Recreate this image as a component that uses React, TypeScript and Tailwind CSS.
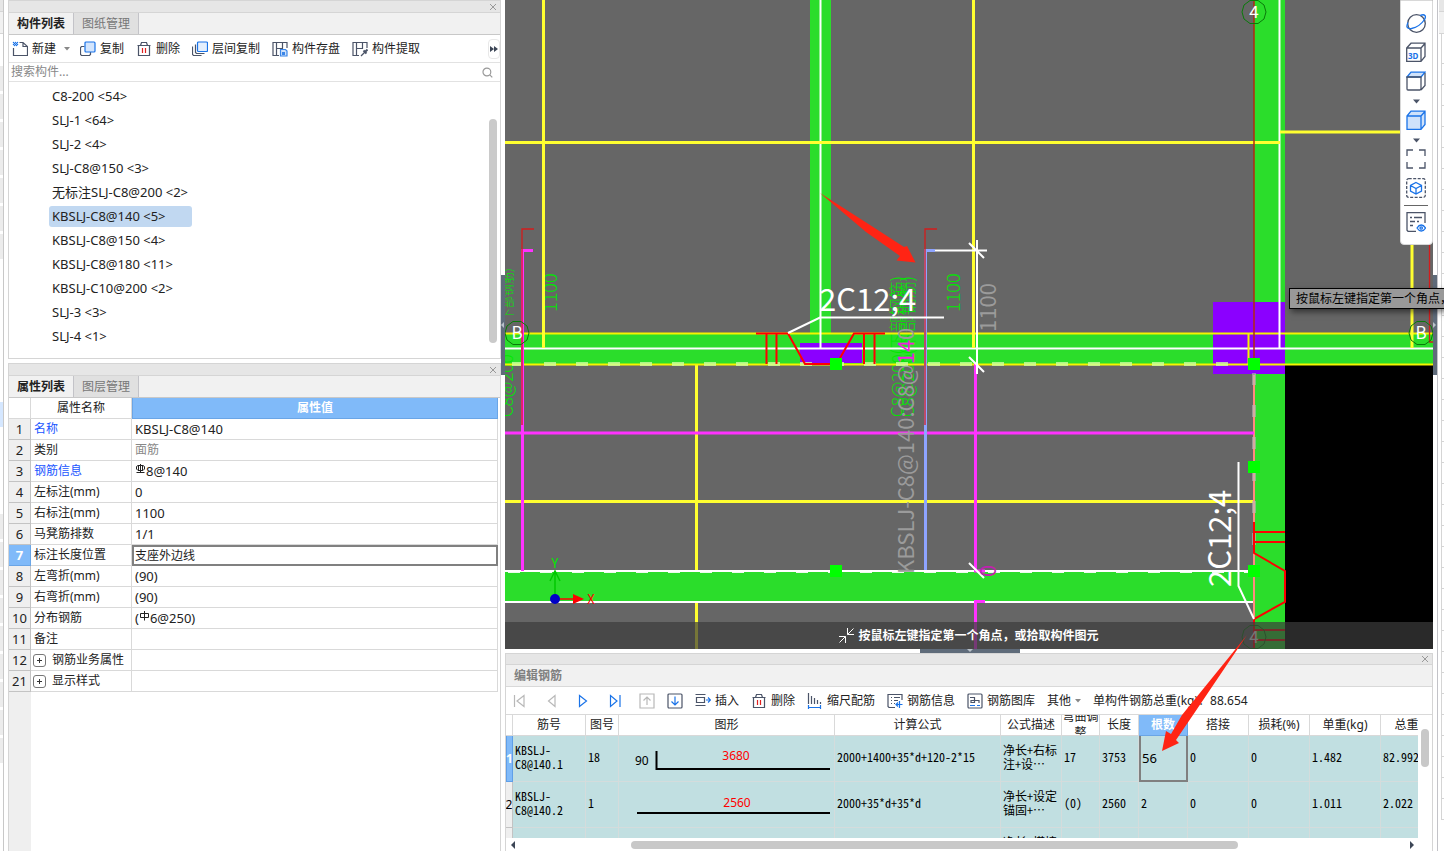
import { useState } from 'react';
import type { ReactNode } from 'react';

const components = [
  'C8-200 <54>',
  'SLJ-1 <64>',
  'SLJ-2 <4>',
  'SLJ-C8@150 <3>',
  '无标注SLJ-C8@200 <2>',
  'KBSLJ-C8@140 <5>',
  'KBSLJ-C8@150 <4>',
  'KBSLJ-C8@180 <11>',
  'KBSLJ-C10@200 <2>',
  'SLJ-3 <3>',
  'SLJ-4 <1>',
];

type Property = {
  no: number;
  name: string;
  value: ReactNode;
  link?: boolean;
  muted?: boolean;
  group?: boolean;
};

// HRB400
const RebarC = () => (
  <svg width="11" height="11" viewBox="0 0 11 11" className="mb-1 shrink-0" fill="none" stroke="#222">
    <path d="M3 1.500h5l1.500 1v2.500l-1.500 1.500h-5l-1.500-1.500v-2.500zM5.500 0v9M3.500 1.500v5M7.500 1.500v5M1.500 8.500h8" />
  </svg>
);

// HPB300
const RebarA = () => (
  <svg width="11" height="11" viewBox="0 0 11 11" className="mb-1 shrink-0" fill="none" stroke="#222">
    <path d="M1.500 2.500h8v4h-8zM5.500 0v9.500" />
  </svg>
);

const properties: Property[] = [
  { no: 1, name: '名称', value: 'KBSLJ-C8@140', link: true },
  { no: 2, name: '类别', value: '面筋', muted: true },
  { no: 3, name: '钢筋信息', value: <><RebarC />8@140</>, link: true },
  { no: 4, name: '左标注(mm)', value: '0' },
  { no: 5, name: '右标注(mm)', value: '1100' },
  { no: 6, name: '马凳筋排数', value: '1/1' },
  { no: 7, name: '标注长度位置', value: '支座外边线' },
  { no: 8, name: '左弯折(mm)', value: '(90)' },
  { no: 9, name: '右弯折(mm)', value: '(90)' },
  { no: 10, name: '分布钢筋', value: <>(<RebarA />6@250)</> },
  { no: 11, name: '备注', value: '' },
  { no: 12, name: '钢筋业务属性', value: '', group: true },
  { no: 21, name: '显示样式', value: '', group: true },
];

const CloseIcon = () => (
  <svg width="8" height="8" viewBox="0 0 8 8" stroke="#999" fill="none">
    <path d="M1 1l6 6M7 1L1 7" />
  </svg>
);

const Caret = () => (
  <svg width="6" height="4" viewBox="0 0 6 4" fill="#888">
    <path d="M0 0h6L3 3.500z" />
  </svg>
);

const Icon = ({ children }: { children: ReactNode }) => (
  <svg width="16" height="16" viewBox="0 0 16 16" fill="none" stroke="#4b5468" strokeWidth="1.2" className="shrink-0">
    {children}
  </svg>
);

const NewIcon = () => (
  <Icon>
    <path d="M1.500 7v7.500h14v-9L11 1.500H7.500M11 1.500v4h4.500" />
    <path d="M1 1h1v1H1zM3 1h1v1H3zM5 1h1v1H5zM2 2h1v1H2zM4 2h1v1H4zM1 3h1v1H1zM3 3h1v1H3zM5 3h1v1H5zM2 4h1v1H2zM4 4h1v1H4z" fill="#1a73e8" stroke="#1a73e8" strokeWidth="0.300" />
  </Icon>
);

const CopyIcon = () => (
  <Icon>
    <path d="M4.500 5.500H1.500l-1 1v7l1 1h8l1-1v-3" />
    <rect x="5" y="1" width="10" height="10" rx="1" fill="#d3e5fd" stroke="#1a73e8" />
  </Icon>
);

const DeleteIcon = () => (
  <Icon>
    <path d="M1.500 4.500h13M4.500 4.500l1-3h5l1 3M2.500 4.500v10h11v-10" />
    <path d="M6.500 7v5M9.500 7v5" stroke="#e02020" />
  </Icon>
);

const FloorCopyIcon = () => (
  <Icon>
    <path d="M3.500 3.500v8l1 1h8M.5 5.500v8l1 1h8" />
    <rect x="5.500" y="1" width="10" height="9.500" rx="1" fill="#e4effd" stroke="#1a73e8" />
  </Icon>
);

const SaveIcon = () => (
  <Icon>
    <path d="M7 14.500H1V1.500h14V7M4.500 14.500v-7h6v-6M4.500 1.500v6" />
    <path d="M8.500 8.500h5l1.500 1.500v5h-6.500z" stroke="#3b86e8" fill="#cfe2fb" />
    <path d="M10 11h3v3h-3z" fill="#3b86e8" stroke="none" />
  </Icon>
);

const ExtractIcon = () => (
  <Icon>
    <path d="M7 14.500H1V1.500h14V7M4.500 14.500v-7h6v-6M4.500 1.500v6" />
    <path d="M9 15l4-4" />
    <path d="M11.500 9.500l3 3M13.500 10.500l2-2" strokeWidth="2" />
  </Icon>
);

const InsertIcon = () => (
  <Icon>
    <path d="M.5 1.500h10M.5 12.500h10M1.500 4.500h8v5h-8z" />
    <path d="M11 7h4.500M13 4.500L15.500 7 13 9.500" stroke="#1a73e8" />
  </Icon>
);

const ScaleIcon = () => (
  <Icon>
    <path d="M1.500 0v11M4.500 3v8M7.500 5v6M10.500 7v4M13.500 9v2" />
    <path d="M1.500 12v4M13.500 12v4M2 14.500h11" stroke="#1a73e8" />
  </Icon>
);

const InfoIcon = () => (
  <Icon>
    <path d="M8 14.500H2l-1-1v-12h14V7M4 4.500h1M7 4.500h6M4 7.500h1M7 7.500h4M4 10.500h1M7 10.500h1" />
    <path d="M12.500 8v7M9 11.500h6.500M11 9.500l-2 2 2 2" stroke="#1a73e8" />
  </Icon>
);

const LibraryIcon = () => (
  <Icon>
    <rect x="1" y="1" width="14" height="14" rx="1" />
    <path d="M3 4.500h4.500v5H4V7.500h8V10" />
    <path d="M3 12.500h5M10 12.500h3" stroke="#1a73e8" />
  </Icon>
);

const ToolButton = ({ icon, label }: { icon: ReactNode; label: string }) => (
  <button type="button" className="flex items-center gap-1 whitespace-nowrap">
    {icon}
    {label}
  </button>
);

const TabBar = ({ active, other }: { active: string; other: string }) => (
  <>
    <div className="flex h-[13px] shrink-0 items-center justify-end border-y border-[#d5d5d5] bg-[#e6e6e6] pr-[3px]">
      <button type="button" aria-label="关闭">
        <CloseIcon />
      </button>
    </div>
    <div className="flex h-[22px] shrink-0 border-b border-[#c8c8c8] bg-[#f1f1f1]">
      <button type="button" className="w-[65px] border-r border-[#c3c3c8] font-bold text-[#222]">
        {active}
      </button>
      <button type="button" className="w-[65px] border-r border-[#c3c3c8] bg-[#e0e0e0] text-[#777]">
        {other}
      </button>
    </div>
  </>
);

const ComponentPanel = () => {
  const [selected, setSelected] = useState('KBSLJ-C8@140 <5>');
  return (
    <section className="relative border-x border-b border-[#d5d5d5] bg-white">
      <TabBar active="构件列表" other="图纸管理" />
      <div className="flex h-7 items-center gap-3 border-b border-[#e2e2e2] pl-[3px]">
        <ToolButton icon={<NewIcon />} label="新建" />
        <div className="-ml-1 mr-[-2px]">
          <Caret />
        </div>
        <ToolButton icon={<CopyIcon />} label="复制" />
        <ToolButton icon={<DeleteIcon />} label="删除" />
        <ToolButton icon={<FloorCopyIcon />} label="层间复制" />
        <ToolButton icon={<SaveIcon />} label="构件存盘" />
        <ToolButton icon={<ExtractIcon />} label="构件提取" />
        <button type="button" aria-label="更多" className="ml-auto flex h-5 w-3 items-center justify-center rounded border border-[#e8e8e8]">
          <svg width="8" height="6" viewBox="0 0 8 6" fill="#3c4656" className="shrink-0">
            <path d="M0 0l4 3-4 3zM4 0l4 3-4 3z" />
          </svg>
        </button>
      </div>
      <label className="flex h-[19px] items-center border-b border-[#e2e2e2] pl-0.5 pr-[7px]">
        <input type="text" aria-label="搜索构件" placeholder="搜索构件..." className="w-full outline-none placeholder:text-[#888]" />
        <svg width="11" height="11" viewBox="0 0 11 11" fill="none" stroke="#999" strokeWidth="1.2">
          <circle cx="5" cy="5" r="4" />
          <path d="M8 8l2.500 2.500" />
        </svg>
      </label>
      <ul className="pt-[2px] pb-[10px] pl-10 text-[13px]">
        {components.map((item) => (
          <li key={item} className="flex h-6 items-center">
            <button
              type="button"
              onClick={() => setSelected(item)}
              className={
                item === selected
                  ? 'h-[21px] w-[143px] rounded-[3px] bg-[#c1d8f1] pl-[3px] text-left whitespace-nowrap'
                  : 'h-[21px] w-[143px] pl-[3px] text-left whitespace-nowrap'
              }
            >
              {item}
            </button>
          </li>
        ))}
      </ul>
      <div className="absolute right-[3px] bottom-[15px] h-56 w-2 rounded-full bg-[#cacaca]" />
    </section>
  );
};

const PropertyPanel = () => (
  <section className="flex grow flex-col border-x border-[#d5d5d5] bg-white">
    <TabBar active="属性列表" other="图层管理" />
    <table className="mr-[2px] table-fixed border-separate border-spacing-0">
      <colgroup>
        <col className="w-[22px]" />
        <col className="w-[101px]" />
        <col />
      </colgroup>
      <thead>
        <tr className="h-[21px]">
          <th className="border-r border-b border-[#d9d9d9] p-0" />
          <th className="border-r border-b border-[#d9d9d9] p-0 font-normal">属性名称</th>
          <th className="border border-t-0 border-[#6aa5e6] bg-[#80baf9] p-0 font-bold text-white">属性值</th>
        </tr>
      </thead>
      <tbody>
        {properties.map((row) => (
          <tr key={row.no} className="h-[21px]">
            <td
              className={
                row.no === 7
                  ? 'border-r border-b border-[#6aa5e6] bg-[#80baf9] p-0 text-center text-[13px] leading-5 font-bold text-white'
                  : 'border-r border-b border-[#c3c3c3] bg-[#efefef] p-0 text-center text-[13px] leading-5'
              }
            >
              {row.no}
            </td>
            <td className="border-r border-b border-[#d9d9d9] p-0 pl-[3px]">
              <div className={row.link ? 'flex h-5 items-center text-[#1a56ff]' : 'flex h-5 items-center'}>
                {row.group && (
                  <button type="button" aria-label="展开" className="mr-[6px] -ml-px flex size-[13px] items-center justify-center rounded-[3px] border border-[#777]">
                    <svg width="5" height="5" viewBox="0 0 5 5" stroke="#333">
                      <path d="M2.500 0v5M0 2.500h5" />
                    </svg>
                  </button>
                )}
                {row.name}
              </div>
            </td>
            <td className={row.no === 7 ? 'border-2 border-[#808080] p-0 pl-px' : 'border-r border-b border-[#d9d9d9] p-0 pl-[3px]'}>
              <div
                className={
                  row.muted ? 'flex h-5 items-center text-[#888]' : row.no === 7 ? 'flex h-[17px] items-center' : 'flex h-5 items-center text-[13px]'
                }
              >
                {row.value}
              </div>
            </td>
          </tr>
        ))}
      </tbody>
    </table>
    <div className="w-[22px] grow bg-[#efefef]" />
  </section>
);

const AxisBubble = ({ x, y, label }: { x: number; y: number; label: string }) => (
  <g>
    <path
      transform={`translate(${x} ${y})`}
      d="M-4 -11.500L4 -11.500L10 -7L12 0L10 7L4 11.500L-4 11.500L-10 7L-12 0L-10 -7Z"
      fill="none"
      stroke="#0a7a0a"
    />
    <text x={x} y={y + 6} textAnchor="middle" fill="#fff" fontSize="17">
      {label}
    </text>
  </g>
);

const Grip = ({ x, y }: { x: number; y: number }) => <rect x={x - 6} y={y - 6} width="12" height="12" fill="#0f0" />;

const Drawing = () => (
  <svg
    className="absolute inset-0 size-full font-['Noto_Sans_CJK_SC',sans-serif]"
    viewBox="505 0 928 649"
    preserveAspectRatio="xMinYMin slice"
    fill="none"
  >
    <rect x="505" width="928" height="649" fill="#666" />
    <rect x="1285" y="365" width="148" height="284" fill="#000" />

    {/* slab grid below the beam */}
    <path d="M696.500 364V649M505 501.500H1254" stroke="#ffff30" strokeWidth="3" />

    {/* beams */}
    <g fill="#2bdd2b">
      <rect x="810" width="21" height="334" />
      <rect x="505" y="333" width="928" height="32" />
      <rect x="505" y="571" width="780" height="31" />
      <rect x="1254" width="31" height="649" />
    </g>
    <rect x="800" y="343" width="62" height="20" fill="#8b00ff" />
    <rect x="1213" y="302" width="72" height="72" fill="#8b00ff" />

    {/* dimension texts from the drawing sheet */}
    <g fill="#00e800" fontSize="17" fontWeight="300">
      <text transform="translate(513 320) rotate(-90)" fontSize="12">下部钢筋)</text>
      <text transform="translate(513 417) rotate(-90)">C8@200</text>
      <text transform="translate(904 417) rotate(-90)">C8@200(下部钢筋)</text>
      <text transform="translate(914 417) rotate(-90)">C8@200(下部钢筋)</text>
      <g fontSize="18">
        <text transform="translate(557 312) rotate(-90)">1100</text>
        <text transform="translate(960 312) rotate(-90)">1100</text>
      </g>
    </g>

    <path d="M505 333.500H1433M505 364.500H1433" stroke="#f4f400" strokeWidth="2" />
    <path d="M505 348.500H1433M820.500 0V348M1279.500 0V348M505 571H1254M505 602H1254" stroke="#fff" strokeWidth="2" />
    <path d="M512 364H1248" stroke="#d0ffa0" strokeWidth="4" strokeDasharray="12 20" opacity="0.8" />
    <path d="M508 571.500H1248" stroke="#fff" strokeWidth="3" strokeDasharray="12 20" opacity="0.9" />
    <path d="M543.500 0V348M973.500 0V348M1412 0V348M505 142.500H1280M1280 132H1433" stroke="#ffff30" strokeWidth="3" />
    <path d="M1248.500 333V364" stroke="#f4f400" strokeWidth="2" />
    <path d="M1254 0V364" stroke="#b02a10" strokeWidth="1.500" />
    <path d="M1254 375V619" stroke="#ff8c80" strokeWidth="2" />
    <path d="M1254 373V560" stroke="#bbb" strokeWidth="4" strokeDasharray="12 20" opacity="0.6" />

    {/* top reinforcement */}
    <g stroke="#ff32ff" strokeWidth="3">
      <path d="M505 433H1254M522.500 571V250.500H533M975.500 364V571H985M985 601.500H975.500V649" />
    </g>
    <path d="M925.500 570V250.500H935" stroke="#8ea4ff" strokeWidth="3" />
    <path d="M522 425V229H534M925 425V229H937M1429.500 0V342H1433" stroke="#d41c1c" strokeWidth="1.300" />
    <path d="M935 250.500H987M977 240V374M969 243L984 258M969 357L984 372M969 563L984 578" stroke="#fff" strokeWidth="2" />

    {/* stirrup hooks */}
    <path
      d="M756 333.500H788L805 364H830M766.500 334V364M776.500 334V364M840 358L854 333.500H885M864 334V364M874.500 334V364"
      stroke="#f00"
      strokeWidth="2"
    />
    <path d="M1254 522V553L1285 571V602L1254 619V649M1254 532H1285M1254 542H1285M1254 630H1285M1254 640H1285" stroke="#f00" strokeWidth="2" />

    <g fill="#9b9b9b" fontSize="22">
      <text transform="translate(914 574) rotate(-90)">
        KBSLJ-C8@140:C8@<tspan fill="#f020e0">14</tspan>0
      </text>
      <text transform="translate(996 332) rotate(-90)">1100</text>
      <text transform="translate(996 577) rotate(-90)" fill="#c020b0">0</text>
    </g>
    <path d="M788 333L820 317.500H944M1238.500 462V586L1254 619" stroke="#fff" strokeWidth="2" />
    <g fill="#fff" fontSize="31">
      <text x="819" y="311">2C12;4</text>
      <text transform="translate(1231 587) rotate(-90)">2C12;4</text>
    </g>

    <Grip x={836} y={364} />
    <Grip x={836} y={571} />
    <Grip x={1254} y={364} />
    <Grip x={1254} y={467} />
    <Grip x={1254} y={571} />

    <AxisBubble x={1254} y={12} label="4" />
    <AxisBubble x={1254} y={637} label="4" />
    <AxisBubble x={517} y={333} label="B" />
    <AxisBubble x={1421} y={333} label="B" />

    {/* UCS */}
    <path d="M555 599V572M550 581L555 571L560 581" stroke="#00c800" strokeWidth="1.500" />
    <path d="M555 599H575" stroke="#f00" strokeWidth="1.500" />
    <path d="M573 594L584 599L573 604Z" fill="#f00" />
    <circle cx="555" cy="599" r="5" fill="#0000c8" />
    <text x="555" y="568" textAnchor="middle" fill="#00e800" fontSize="13">Y</text>
    <text x="591" y="604" textAnchor="middle" fill="#f00" fontSize="13">X</text>

    <path d="M820 193L870 225L904 247L907 246L915.500 262.500L896.500 260.500L900 256L866 232Z" fill="#ff2414" />
  </svg>
);

const ViewIcon = ({ children }: { children: ReactNode }) => (
  <svg width="20" height="20" viewBox="0 0 20 20" fill="none" stroke="#4b5468" strokeWidth="1.300">
    {children}
  </svg>
);

const ViewCaret = () => (
  <svg width="7" height="10" viewBox="0 0 7 10" fill="#4b5468">
    <path d="M0 3.500h7l-3.500 4z" />
  </svg>
);

const ViewToolbar = () => (
  <div className="absolute top-0 right-0 flex w-[33px] flex-col items-center rounded-b border border-[#d8d8d8] bg-white pt-3 pr-px pb-3 *:shrink-0">
    <button type="button" aria-label="动态观察" className="mb-[9px]">
      <ViewIcon>
        <circle cx="10.500" cy="10.500" r="8.800" />
        <path d="M14 2.500c5-2 6.500.5 4.500 4-2.500 4-8 8-13 9-5 .8-5.500-2-3.500-6" stroke="#1a73e8" />
      </ViewIcon>
    </button>
    <button type="button" aria-label="三维" className="mb-[9px]">
      <ViewIcon>
        <path d="M.7 6L5 1.200H19V14.500L15 19.300H.7zM.7 6H15V19.300M15 6l4-4.500" />
        <text x="2" y="17" fill="#1a73e8" stroke="none" fontSize="8" fontWeight="700">3D</text>
      </ViewIcon>
    </button>
    <button type="button" aria-label="俯视">
      <ViewIcon>
        <path d="M1 6L5 1.200H19L15 6z" fill="#cfe2fb" stroke="#1a73e8" />
        <path d="M1 6V18q0 1 1 1H14l1-1V6zM19 2V14.500L15 19" />
      </ViewIcon>
    </button>
    <div className="flex h-[19px] items-center">
      <ViewCaret />
    </div>
    <button type="button" aria-label="实体">
      <ViewIcon>
        <path d="M1 6L5 1.200H19V14.500L15 19.300H1zM1 6H15V19.300M15 6l4-4.500" fill="#cfe2fb" stroke="#1a73e8" />
      </ViewIcon>
    </button>
    <div className="flex h-[19px] items-center">
      <ViewCaret />
    </div>
    <button type="button" aria-label="全屏" className="mb-[9px]">
      <ViewIcon>
        <path d="M1 7V1H7M13 1H19V7M19 13V19H13M7 19H1V13" />
      </ViewIcon>
    </button>
    <button type="button" aria-label="局部三维" className="mb-[7px]">
      <ViewIcon>
        <rect x="0.700" y="0.700" width="18.600" height="18.600" rx="2" strokeDasharray="3 1.500" />
        <path d="M10 4.500L15.500 7.500V13L10 16L4.500 13V7.500zM4.500 7.500L10 10.500L15.500 7.500M10 10.500V16" stroke="#1a73e8" />
      </ViewIcon>
    </button>
    <div className="mb-[6px] h-px w-6 bg-[#666]" />
    <button type="button" aria-label="显示设置">
      <ViewIcon>
        <path d="M10 19.300H2l-1-1V.7H19V11M4 5.500h2M8 5.500h8M4 9.500h5M11 9.500h2M4 13.500h3" />
        <path d="M11 16c2.500-4 6-4 8.500 0-2.500 4-6 4-8.500 0z" stroke="#1a73e8" />
        <circle cx="15.200" cy="16" r="1.200" stroke="#1a73e8" />
      </ViewIcon>
    </button>
  </div>
);

const ShapeHook = () => (
  <svg width="215" height="45" viewBox="0 0 215 45" className="block font-['Noto_Sans',sans-serif]" fontSize="12">
    <path d="M37.500 15V33H211" fill="none" stroke="#000" strokeWidth="2" />
    <text x="16" y="29">90</text>
    <text x="117" y="24" textAnchor="middle" fill="#f00">3680</text>
  </svg>
);

const ShapeStraight = () => (
  <svg width="215" height="45" viewBox="0 0 215 45" className="block font-['Noto_Sans',sans-serif]" fontSize="12">
    <path d="M18 31H211" stroke="#000" strokeWidth="2" />
    <text x="118" y="25" textAnchor="middle" fill="#f00">2560</text>
  </svg>
);

const columns = ['筋号', '图号', '图形', '计算公式', '公式描述', '弯曲调整', '长度', '根数', '搭接', '损耗(%)', '单重(kg)', '总重(kg)'];

const bars: ReactNode[][] = [
  [<>KBSLJ-<br />C8@140.1</>, '18', <ShapeHook />, '2000+1400+35*d+120-2*15', <>净长+右标<br />注+设⋯</>, '17', '3753', '56', '0', '0', '1.482', '82.992'],
  [<>KBSLJ-<br />C8@140.2</>, '1', <ShapeStraight />, '2000+35*d+35*d', <>净长+设定<br />锚固+⋯</>, '(0)', '2560', '2', '0', '0', '1.011', '2.022'],
  ['', '', '', '', <>净长+搭接<br />锚固+⋯</>, '', '', '', '', '', '', ''],
];

const NavButton = ({ label, d, color }: { label: string; d: string; color: string }) => (
  <button type="button" aria-label={label}>
    <svg width="16" height="16" viewBox="0 0 16 16" fill="none" stroke={color} strokeWidth="1.200">
      <path d={d} />
    </svg>
  </button>
);

const RebarPanel = () => (
  <section className="flex h-[198px] shrink-0 flex-col border-x border-t border-[#d5d5d5] bg-white">
    <div className="flex h-[11px] shrink-0 items-center justify-end border-b border-[#d5d5d5] bg-[#e6e6e6] pr-[3px]">
      <button type="button" aria-label="关闭">
        <CloseIcon />
      </button>
    </div>
    <h2 className="h-[22px] shrink-0 border-b border-[#d9d9d9] bg-[#f1f1f1] pl-2 leading-[21px] font-bold text-[#808080]">编辑钢筋</h2>
    <div className="flex h-7 shrink-0 items-center gap-3 border-b border-[#d9d9d9] pl-[5px] whitespace-nowrap">
      <div className="flex gap-4 pr-1">
        <NavButton label="首条" d="M3.500 2v12M13 2.500v11L6 8z" color="#b8b8b8" />
        <NavButton label="上一条" d="M12 2.500v11L5.500 8z" color="#b8b8b8" />
        <NavButton label="下一条" d="M4.500 2.500v11L11.500 8z" color="#1a73e8" />
        <NavButton label="末条" d="M3.500 2.500v11L10 8zM13 2v12" color="#1a73e8" />
      </div>
      <NavButton label="上移" d="M1 1h14v14H1zM8 12V4.500M4.500 7.500L8 4l3.500 3.500" color="#b8b8b8" />
      <button type="button" aria-label="下移">
        <Icon>
          <rect x="1" y="1" width="14" height="14" rx="1" />
          <path d="M8 3.500V12M4.500 8.500L8 12l3.500-3.500" stroke="#1a73e8" />
        </Icon>
      </button>
      <ToolButton icon={<InsertIcon />} label="插入" />
      <ToolButton icon={<DeleteIcon />} label="删除" />
      <ToolButton icon={<ScaleIcon />} label="缩尺配筋" />
      <ToolButton icon={<InfoIcon />} label="钢筋信息" />
      <ToolButton icon={<LibraryIcon />} label="钢筋图库" />
      <button type="button" className="flex items-center gap-1">
        其他
        <Caret />
      </button>
      <span>单构件钢筋总重(kg)：88.654</span>
    </div>
    <div className="flex min-h-0 grow">
      <div className="min-w-0 grow overflow-hidden">
        <table className="w-[948px] table-fixed border-separate border-spacing-0">
          <colgroup>
            <col className="w-[7px]" />
            <col className="w-[73px]" />
            <col className="w-[33px]" />
            <col className="w-[216px]" />
            <col className="w-[166px]" />
            <col className="w-[61px]" />
            <col className="w-[38px]" />
            <col className="w-[39px]" />
            <col className="w-[49px]" />
            <col className="w-[61px]" />
            <col className="w-[61px]" />
            <col className="w-[71px]" />
            <col className="w-[73px]" />
          </colgroup>
          <thead>
            <tr>
              <th className="border-r border-b border-[#d9d9d9] p-0" />
              {columns.map((name) => (
                <th
                  key={name}
                  className={
                    name === '根数'
                      ? 'border-r border-b border-[#6aa5e6] bg-[#80baf9] p-0 font-bold text-white'
                      : 'border-r border-b border-[#d9d9d9] p-0 font-normal'
                  }
                >
                  <div className="flex h-5 items-center justify-center overflow-hidden leading-4">{name}</div>
                </th>
              ))}
            </tr>
          </thead>
          <tbody className="font-['Noto_Sans_Mono_CJK_SC','DejaVu_Sans_Mono','Noto_Sans_CJK_SC',monospace] leading-[14px] text-black">
            {bars.map((cells, row) => (
              <tr key={row} className="h-[46px]">
                <td
                  className={
                    row === 0
                      ? "border border-t-0 border-[#5f9fe8] bg-[#80baf9] p-0 text-center font-['Noto_Sans'] font-bold text-white"
                      : "border-r border-b border-[#c3c3c3] bg-[#efefef] p-0 text-center font-['Noto_Sans']"
                  }
                >
                  <div className="flex justify-center">{row < 2 && row + 1}</div>
                </td>
                {cells.map((cell, i) =>
                  row === 0 && i === 7 ? (
                    <td key={i} className="border-2 border-t-0 border-[#808080] bg-[#c1dfe1] p-0 pl-px">
                      <input aria-label="根数" defaultValue="56" className="w-10 font-['Noto_Sans'] text-[13px] outline-none" />
                    </td>
                  ) : (
                    <td key={i} className={i === 2 ? 'border-r border-b border-[#d4dcdc] bg-[#c1dfe1] p-0' : 'border-r border-b border-[#d4dcdc] bg-[#c1dfe1] p-0 pb-1 pl-[2px] whitespace-nowrap'}>
                      {cell}
                    </td>
                  ),
                )}
              </tr>
            ))}
          </tbody>
        </table>
      </div>
      <div className="w-[14px] pt-[14px] pl-[3px]">
        <div className="h-[38px] w-2 rounded-full bg-[#c8c8c8]" />
      </div>
    </div>
    <div className="flex h-[13px] shrink-0 items-center pr-[18px] pl-[5px]">
      <svg width="4" height="8" viewBox="0 0 4 8" fill="#3c4656">
        <path d="M4 0v8L0 4z" />
      </svg>
      <div className="flex grow pl-[116px]">
        <div className="h-2 w-[607px] rounded-full bg-[#c8c8c8]" />
      </div>
      <svg width="4" height="8" viewBox="0 0 4 8" fill="#3c4656">
        <path d="M0 0v8l4-4z" />
      </svg>
    </div>
  </section>
);

const leftBlocks = Array.from({ length: 25 }, (_, i) => i);

const LeftEdge = () => (
  <div className="flex w-2 shrink-0 bg-white">
    <div className="w-1 overflow-hidden border-r border-[#c8c8c8]">
      <div className="h-3 border-b border-[#d5d5d5] bg-[#e6e6e6]" />
      <div className="h-[22px] border-b border-[#d5d5d5] bg-[#f1f1f1]" />
      <div className="flex flex-col gap-[3px] pt-8">
        {leftBlocks.map((i) => (
          <div key={i} className={i === 12 ? 'h-[25px] bg-[#d5e7ff]' : i < 7 || i > 15 ? 'h-[25px] bg-[#ececec]' : 'h-[25px]'} />
        ))}
      </div>
    </div>
  </div>
);

const rightRows = Array.from({ length: 36 }, (_, i) => i);

const RightEdge = () => (
  <div className="flex w-[11px] shrink-0 bg-white">
    <div className="flex w-[5px] items-center border-r border-[#c3c3c8]">
      <div className="mb-[201px] flex h-[100px] w-1 items-center bg-[#5f6b7a]">
        <svg width="3" height="6" viewBox="0 0 3 6" fill="#b8c0c8">
          <path d="M0 0l3 3-3 3z" />
        </svg>
      </div>
    </div>
    <div className="ml-px w-[5px] overflow-hidden">
      <div className="h-3 border-b border-[#d5d5d5] bg-[#e6e6e6]" />
      <div className="h-[22px] border-b border-[#d5d5d5] bg-[#f1f1f1]" />
      <div className="ml-[2px] h-[30px] border-b border-l border-[#d5d5d5]" />
      {rightRows.map((i) => (
        <div key={i} className="ml-[2px] h-[21px] border-b border-l border-[#d5d5d5]" />
      ))}
    </div>
  </div>
);

const App = () => {
  return (
    <div className="relative flex h-screen w-full overflow-hidden bg-white font-['Noto_Sans','Noto_Sans_CJK_SC',sans-serif] text-[12px] leading-4 text-[#222]">
      <LeftEdge />
      <aside className="flex w-[493px] shrink-0 flex-col gap-1">
        <ComponentPanel />
        <PropertyPanel />
      </aside>
      <div className="flex w-1 shrink-0 items-center">
        <div className="mb-[201px] flex h-[100px] w-1 items-center bg-[#5f6b7a]">
          <svg width="3" height="6" viewBox="0 0 3 6" fill="#b8c0c8">
            <path d="M3 0v6L0 3z" />
          </svg>
        </div>
      </div>
      <main className="relative flex min-w-0 grow flex-col">
        <div className="relative min-h-0 grow overflow-hidden">
          <Drawing />
          <div className="absolute inset-x-0 bottom-0 flex h-[27px] items-center justify-center gap-1 bg-[#3c3c3c]/70 font-bold text-white">
            <svg width="15" height="15" viewBox="0 0 15 15" fill="none" stroke="#fff">
              <path d="M0 8.500h6.500V15M6.500 8.500L.5 14.500M8.500 0v6.500H15M8.500 6.500l6-6" />
            </svg>
            按鼠标左键指定第一个角点，或拾取构件图元
          </div>
          <ViewToolbar />
        </div>
        <div className="flex h-1 shrink-0 justify-center pl-[2px]">
          <div className="flex w-[100px] justify-center bg-[#5f6b7a]">
            <svg width="6" height="3" viewBox="0 0 6 3" fill="#b8c0c8">
              <path d="M0 0h6L3 3z" />
            </svg>
          </div>
        </div>
        <RebarPanel />
        <svg className="pointer-events-none absolute top-[630px] left-[650px]" width="100" height="125" viewBox="1155 630 100 125">
          <path d="M1247 635L1182 715L1171 734L1166 731L1162 751L1179 743L1176 740L1193 715Z" fill="#ff2414" />
        </svg>
      </main>
      <RightEdge />
      <div
        role="tooltip"
        className="absolute top-[288px] left-[1289px] h-[21px] border border-black bg-[#999] pr-2 pl-1.5 leading-[19px] whitespace-nowrap text-black shadow-[2px_3px_6px_rgba(0,0,0,0.5)]"
      >
        按鼠标左键指定第一个角点，或拾取构件图元
      </div>
    </div>
  );
};

export default App;
